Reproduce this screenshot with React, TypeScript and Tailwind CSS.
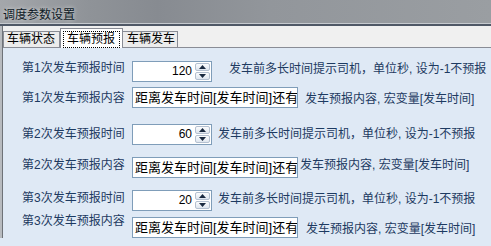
const font = { fontFamily: '"Liberation Sans", "Noto Sans CJK SC", sans-serif' };

function Arrow({ up }: { up?: boolean }) {
  return (
    <svg width="7" height="4" viewBox="0 0 7 4" className="block">
      {up ? <polygon points="0,4 7,4 3.5,0" fill="#1a2a40" /> : <polygon points="0,0 7,0 3.5,4" fill="#1a2a40" />}
    </svg>
  );
}

function Spin({ value }: { value: string }) {
  return (
    <div className="flex h-[21px] w-[80px] shrink-0 border border-[#7f9db9] bg-white">
      <div className="flex-1 pr-[3px] text-right text-[12px] leading-[19px] text-black">{value}</div>
      <div className="my-px mr-px flex w-[15px] flex-col gap-px">
        <div className="flex flex-1 items-center justify-center rounded-[2px] border border-[#b4c0d0] bg-[linear-gradient(#fbfcfd,#dfe6ef)]">
          <Arrow up />
        </div>
        <div className="flex flex-1 items-center justify-center rounded-[2px] border border-[#b4c0d0] bg-[linear-gradient(#fbfcfd,#dfe6ef)]">
          <Arrow />
        </div>
      </div>
    </div>
  );
}

function TextBox({ value }: { value: string }) {
  return (
    <div className="h-[21px] w-[166px] shrink-0 overflow-hidden whitespace-nowrap border border-[#7f9db9] bg-white pl-[2px] text-[13px] leading-[19px] text-black">
      {value}
    </div>
  );
}

const hintTime = '发车前多长时间提示司机，单位秒, 设为-1不预报';
const hintText = '发车预报内容, 宏变量[发车时间]';

export default function App() {
  return (
    <div className="h-[246px] w-[491px] overflow-hidden bg-[#dfe9f5]" style={font}>
      <div className="h-[23px] bg-[linear-gradient(90deg,#a4a7ab_0%,#8f9398_18%,#878b91_32%,#92969b_55%,#9a9ea2_100%)] pl-[3px] pt-[2px]">
        <span className="text-[12px] leading-[16px] text-[#0e1a26] [text-shadow:0_0_4px_rgba(255,255,255,0.7)]">调度参数设置</span>
      </div>
      <div className="h-px bg-[#c6cacf]" />
      <div className="h-[2px] bg-[#4f5866]" />
      <div className="border-l-2 border-[#b8bbbf]">
        <div className="border-l border-[#6e7278]">
          <div className="flex h-[22px] items-end border-b border-[#898c95] bg-[#f0f0f0]">
            <div className="h-[16px] w-[57px] border border-b-0 border-[#898c95] bg-[#ececec] pl-[3px] text-[12px] leading-[15px] text-black">
              车辆状态
            </div>
            <div className="relative -mb-px h-[20px] w-[63px] border border-b-0 border-[#898c95] bg-white pl-[2px] pt-[2px]">
              <div className="h-[17px] w-[57px] border border-dotted border-black pl-[3px] text-[12px] leading-[15px] text-black">
                车辆预报
              </div>
            </div>
            <div className="h-[16px] w-[55px] border border-b-0 border-l-0 border-[#898c95] bg-[#ececec] pl-[4px] text-[12px] leading-[15px] text-black">
              车辆发车
            </div>
          </div>

          <div className="flex flex-col pl-[19px] pt-[13px] text-[12px] leading-[16px] text-[#1d3a61]">
            <div className="flex items-start">
              <div className="-mt-px w-[110px] shrink-0">第1次发车预报时间</div>
              <Spin value="120" />
              <div className="ml-[17px] whitespace-nowrap">{hintTime}</div>
            </div>
            <div className="mt-[5px] flex items-start">
              <div className="mt-[3px] w-[110px] shrink-0">第1次发车预报内容</div>
              <TextBox value="距离发车时间[发车时间]还有P分钟" />
              <div className="ml-[7px] mt-[4px] whitespace-nowrap">{hintText}</div>
            </div>
            <div className="mt-[16px] flex items-start">
              <div className="mt-[2px] w-[110px] shrink-0">第2次发车预报时间</div>
              <Spin value="60" />
              <div className="ml-[6px] mt-[2px] whitespace-nowrap">{hintTime}</div>
            </div>
            <div className="mt-[12px] flex items-start">
              <div className="w-[110px] shrink-0">第2次发车预报内容</div>
              <TextBox value="距离发车时间[发车时间]还有-" />
              <div className="ml-[2px] whitespace-nowrap">{hintText}</div>
            </div>
            <div className="mt-[12px] flex items-start">
              <div className="w-[110px] shrink-0">第3次发车预报时间</div>
              <Spin value="20" />
              <div className="ml-[6px] mt-px whitespace-nowrap">{hintTime}</div>
            </div>
            <div className="mt-[6px] flex items-start">
              <div className="-mt-[4px] w-[110px] shrink-0">第3次发车预报内容</div>
              <TextBox value="距离发车时间[发车时间]还有2分钟" />
              <div className="ml-[8px] mt-[4px] whitespace-nowrap">{hintText}</div>
            </div>
          </div>
        </div>
      </div>
    </div>
  );
}
